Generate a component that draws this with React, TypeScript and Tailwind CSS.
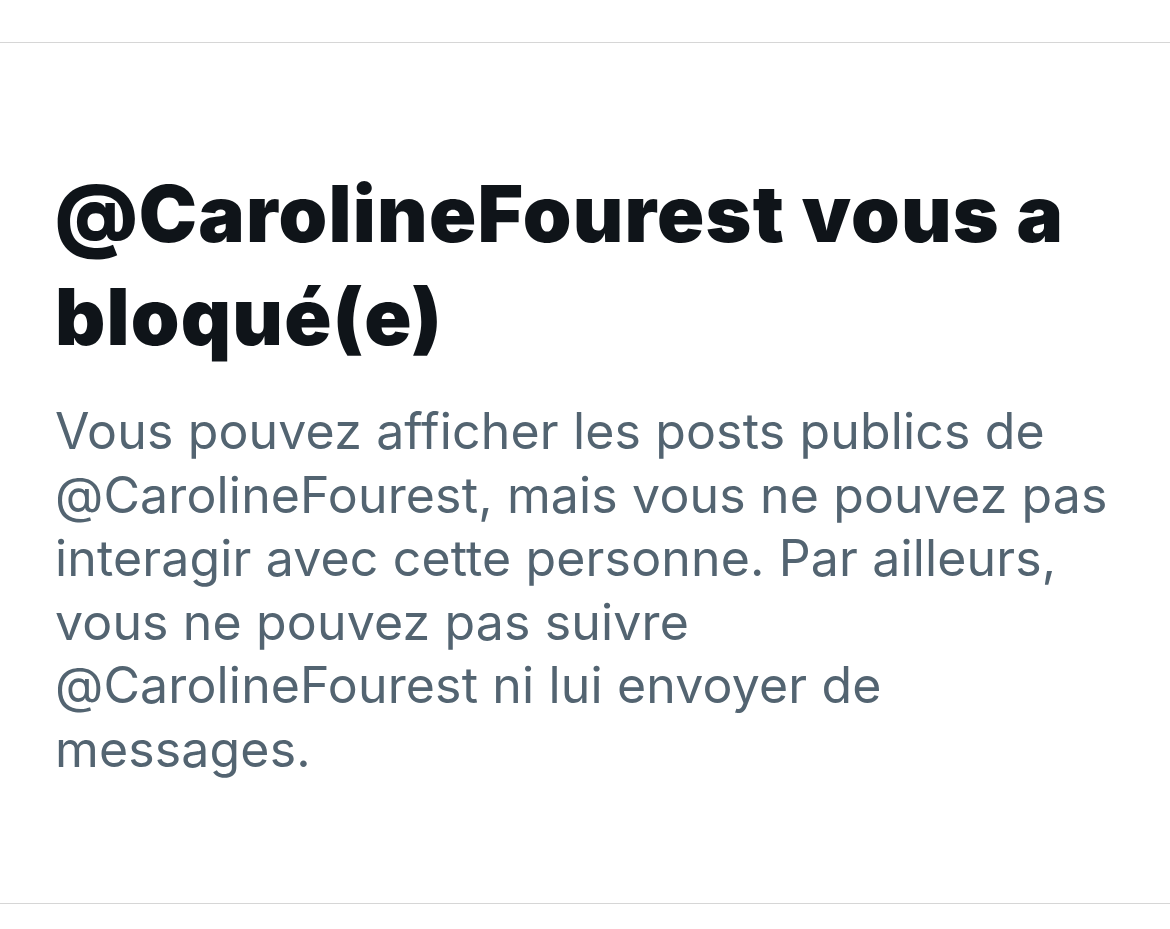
export default function App() {
  return (
    <div className="min-h-screen bg-white pt-[42px]" style={{ fontFamily: 'Inter, "Noto Sans", sans-serif' }}>
      <div className="border-t border-[#d6d6d6]" />
      <div className="px-[55px] pt-[119px] pb-[122px] border-b border-[#d6d6d6]">
        <h1 className="text-[78px] leading-[103px] font-black tracking-[1.2px] text-[#0f1419]">
          @CarolineFourest vous a bloqué(e)
        </h1>
        <p className="mt-[32px] text-[50px] leading-[63.5px] text-[#536471] tracking-[0.15px]">
          Vous pouvez afficher les posts publics de @CarolineFourest, mais vous ne pouvez pas interagir avec cette
          personne. Par ailleurs, vous ne pouvez pas suivre @CarolineFourest ni lui envoyer de messages.
        </p>
      </div>
    </div>
  )
}
